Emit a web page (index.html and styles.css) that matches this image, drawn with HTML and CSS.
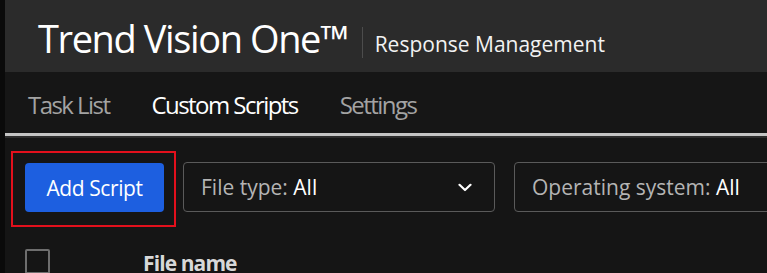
FILE: index.html
```html
<!DOCTYPE html>
<html lang="en">
<head>
    <meta charset="UTF-8">
    <meta name="viewport" content="width=device-width, initial-scale=1.0">
    <title>Response Management</title>
    <link rel="stylesheet" href="styles.css">
</head>
<body>

    <!-- Dark strip on the far left -->
    <div class="side-strip"></div>

    <div class="app">
        <!-- Product header -->
        <header class="top-bar">
            <h1 class="product">Trend Vision One™</h1>
            <span class="divider"></span>
            <span class="app-name">Response Management</span>
        </header>

        <!-- Tabs -->
        <nav class="tabs">
            <a href="#" class="tab">Task List</a>
            <a href="#" class="tab active">Custom Scripts</a>
            <a href="#" class="tab">Settings</a>
        </nav>

        <main class="content">
            <div class="toolbar">
                <span class="highlight">
                    <button type="button" class="btn-primary">Add Script</button>
                </span>
                <div class="filter filter-type">
                    <span class="filter-label">File type: <b>All</b></span>
                    <svg class="chevron" width="14" height="9" viewBox="0 0 14 9">
                        <path d="M1.5 1.8 L7 7 L12.5 1.8" fill="none" stroke="#fff" stroke-width="2.2" stroke-linecap="round" stroke-linejoin="round"/>
                    </svg>
                </div>
                <div class="filter filter-os">
                    <span class="filter-label">Operating system: <b>All</b></span>
                </div>
            </div>

            <div class="table-head">
                <span class="checkbox"></span>
                <span class="col-name">File name</span>
            </div>
        </main>
    </div>

</body>
</html>
```

FILE: styles.css
```css
/* Basic reset */
* {
    margin: 0;
    padding: 0;
    box-sizing: border-box;
}

body {
    font-family: 'Open Sans', 'Noto Sans', sans-serif;
    height: 100vh;
    display: flex;
    background: #151515;
    color: #fff;
    overflow: hidden;
}

.side-strip {
    width: 5px;
    flex-shrink: 0;
    background: #0a0a0a;
}

.app {
    flex: 1;
    min-width: 0;
    display: flex;
    flex-direction: column;
    overflow: hidden;
}

/* Header */
.top-bar {
    height: 72px;
    flex-shrink: 0;
    background: #2b2b2b;
    display: flex;
    align-items: flex-start;
    padding: 19px 0 0 33px;
}

.product {
    font-size: 38px;
    font-weight: 400;
    letter-spacing: -1.4px;
    line-height: 38px;
    color: #fff;
}

.divider {
    width: 1px;
    height: 31px;
    margin: 8px 12px 0 14px;
    background: #4c4c4c;
}

.app-name {
    font-size: 21px;
    line-height: 21px;
    margin-top: 15px;
    color: #f2f2f2;
}

/* Tabs */
.tabs {
    height: 64px;
    flex-shrink: 0;
    background: #161616;
    display: flex;
    align-items: flex-start;
    gap: 42px;
    padding: 21px 0 0 23px;
    border-bottom: 3px solid #c4c4c4;
    box-shadow: 0 2px 0 #2c2c2c;
}

.tab {
    font-size: 24px;
    letter-spacing: -1.55px;
    line-height: 24px;
    color: #a3a3a3;
    text-decoration: none;
}

.tab.active {
    color: #fff;
}

/* Content */
.content {
    padding: 26px 0 0 20px;
}

.toolbar {
    display: flex;
    align-items: flex-start;
    gap: 19px;
}

.highlight {
    position: relative;
    display: flex;
    margin-top: 1px;
}

/* Red annotation frame round the button */
.highlight::after {
    content: '';
    position: absolute;
    top: -12px;
    left: -14px;
    right: -12px;
    bottom: -15px;
    border: 2px solid #e3101c;
}

.btn-primary {
    width: 139px;
    height: 49px;
    background: #1d5fe0;
    color: #fff;
    border: none;
    border-radius: 4px;
    font-family: inherit;
    font-size: 21px;
    letter-spacing: -0.4px;
}

.filter {
    height: 50px;
    border: 1.5px solid #5a5a5a;
    border-radius: 4px;
    display: flex;
    align-items: center;
    justify-content: space-between;
    padding: 0 22px 0 17px;
}

.filter-type {
    width: 312px;
}

.filter-os {
    flex: 1;
    margin-right: -40px;
}

.filter-label {
    font-size: 21px;
    color: #b4b4b4;
}

.filter-label b {
    font-weight: 400;
    color: #fff;
}

.table-head {
    display: flex;
    align-items: flex-start;
    margin-top: 37px;
}

.checkbox {
    width: 25px;
    height: 25px;
    border: 2px solid #6e6e6e;
    border-radius: 2px;
}

.col-name {
    margin-left: 93px;
    font-size: 21px;
    font-weight: 700;
    letter-spacing: -0.9px;
    color: #d8d8d8;
}
```
